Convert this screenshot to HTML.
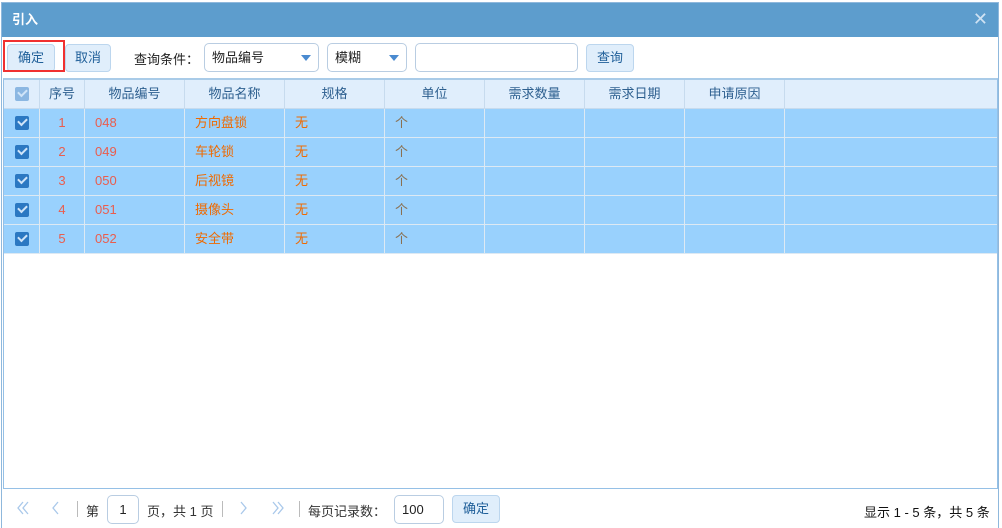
<!DOCTYPE html>
<html><head><meta charset="utf-8"><style>
*{margin:0;padding:0;box-sizing:border-box}
body{width:1002px;height:528px;background:#fff;font-family:"Liberation Sans","Noto Sans CJK SC",sans-serif;font-size:12px;color:#333;position:relative;overflow:hidden}
.abs{position:absolute}
.dlg{left:1px;top:2px;width:998px;height:526px;border:1px solid #8fb8dc;border-bottom:none}
.title{left:2px;top:3px;width:996px;height:34px;background:#5d9dcd;color:#fff;font-weight:bold;font-size:13px;line-height:34px;padding-left:10px}
.btn{height:28px;border:1px solid #bcd6ee;background:#e0eefb;border-radius:4px;color:#1f5f99;text-align:center;line-height:26px;font-size:13px}
.inp{height:29px;border:1px solid #b9cde2;border-radius:5px;background:#fff;line-height:27px;padding-left:7px;font-size:13px;color:#222}
.arr:after{content:"";position:absolute;right:7px;top:11px;border-left:5px solid transparent;border-right:5px solid transparent;border-top:6px solid #4a8ad0}
.grid{left:3px;top:78px;width:995px;height:411px;border:1px solid #95c0e6;border-top:2px solid #a9cbe8}
.row{position:absolute;left:0;width:993px;height:29px;display:flex}
.row div{border-right:1px solid #c7dbee;height:29px;line-height:28px;font-size:13px}
.hd{top:0;background:#e0eefc;border-bottom:1px solid #c7dbee}
.hd div{text-align:center;color:#2d5f8f}
.dr{background:#99d1fd;border-bottom:1px solid #dde9f3}
.dr div{border-right:1px solid #dde9f3}
.c0{width:36px;text-align:center}.c1{width:45px;text-align:center}.c2,.c3,.c4,.c5,.c6,.c7,.c8{width:100px}
.dr .c2,.dr .c3,.dr .c4,.dr .c5{padding-left:10px}
.red{color:#ea5d4d}.or{color:#ef6a00}.gy{color:#8a7050}
.cb{display:inline-block;width:14px;height:14px;background:#2b78c2;border-radius:2px;vertical-align:middle;position:relative;top:-1px}
.cb:after{content:"";position:absolute;left:3px;top:2px;width:7px;height:4px;border-left:2px solid #cfe4f8;border-bottom:2px solid #cfe4f8;transform:rotate(-45deg)}
.hd .cb{background:#8bb7e2}
.ft{font-size:13px;color:#333}
.sep{width:1px;height:16px;background:#bbb}
svg.pg{position:absolute;top:501px}
</style></head><body>
<div class="abs dlg"></div>
<div class="abs title">引入</div>
<div class="abs" style="right:14px;top:9px;color:#cfe2f3;font-size:18px;line-height:20px">✕</div>

<div class="abs btn" style="left:7px;top:44px;width:48px">确定</div>
<div class="abs" style="left:3px;top:40px;width:62px;height:32px;border:2px solid #f03030"></div>
<div class="abs btn" style="left:65px;top:44px;width:46px">取消</div>
<div class="abs" style="left:134px;top:49px;font-size:13px;color:#222">查询条件：</div>
<div class="abs inp arr" style="left:204px;top:43px;width:115px">物品编号</div>
<div class="abs inp arr" style="left:327px;top:43px;width:80px">模糊</div>
<div class="abs inp" style="left:415px;top:43px;width:163px"></div>
<div class="abs btn" style="left:586px;top:44px;width:48px">查询</div>

<div class="abs grid">
<div class="row hd"><div class="c0"><span class="cb"></span></div><div class="c1">序号</div><div class="c2">物品编号</div><div class="c3">物品名称</div><div class="c4">规格</div><div class="c5">单位</div><div class="c6">需求数量</div><div class="c7">需求日期</div><div class="c8">申请原因</div><div style="flex:1;border:none"></div></div>
<div class="row dr" style="top:29px"><div class="c0"><span class="cb"></span></div><div class="c1 red">1</div><div class="c2 red">048</div><div class="c3 or">方向盘锁</div><div class="c4 or">无</div><div class="c5 gy">个</div><div class="c6"></div><div class="c7"></div><div class="c8"></div><div style="flex:1;border:none"></div></div>
<div class="row dr" style="top:58px"><div class="c0"><span class="cb"></span></div><div class="c1 red">2</div><div class="c2 red">049</div><div class="c3 or">车轮锁</div><div class="c4 or">无</div><div class="c5 gy">个</div><div class="c6"></div><div class="c7"></div><div class="c8"></div><div style="flex:1;border:none"></div></div>
<div class="row dr" style="top:87px"><div class="c0"><span class="cb"></span></div><div class="c1 red">3</div><div class="c2 red">050</div><div class="c3 or">后视镜</div><div class="c4 or">无</div><div class="c5 gy">个</div><div class="c6"></div><div class="c7"></div><div class="c8"></div><div style="flex:1;border:none"></div></div>
<div class="row dr" style="top:116px"><div class="c0"><span class="cb"></span></div><div class="c1 red">4</div><div class="c2 red">051</div><div class="c3 or">摄像头</div><div class="c4 or">无</div><div class="c5 gy">个</div><div class="c6"></div><div class="c7"></div><div class="c8"></div><div style="flex:1;border:none"></div></div>
<div class="row dr" style="top:145px"><div class="c0"><span class="cb"></span></div><div class="c1 red">5</div><div class="c2 red">052</div><div class="c3 or">安全带</div><div class="c4 or">无</div><div class="c5 gy">个</div><div class="c6"></div><div class="c7"></div><div class="c8"></div><div style="flex:1;border:none"></div></div>
</div>

<svg class="pg" style="left:16px" width="14" height="14"><path d="M7 1L2 7l5 6M12 1L7 7l5 6" fill="none" stroke="#a9c8ea" stroke-width="1.3"/></svg>
<svg class="pg" style="left:51px" width="10" height="14"><path d="M7 1L2 7l5 6" fill="none" stroke="#a9c8ea" stroke-width="1.3"/></svg>
<div class="abs sep" style="left:77px;top:501px"></div>
<div class="abs ft" style="left:86px;top:501px">第</div>
<div class="abs inp" style="left:107px;top:495px;width:32px;padding:0;text-align:center">1</div>
<div class="abs ft" style="left:147px;top:501px">页，共 1 页</div>
<div class="abs sep" style="left:222px;top:501px"></div>
<svg class="pg" style="left:239px" width="10" height="14"><path d="M2 1l5 6-5 6" fill="none" stroke="#a9c8ea" stroke-width="1.3"/></svg>
<svg class="pg" style="left:271px" width="14" height="14"><path d="M2 1l5 6-5 6M7 1l5 6-5 6" fill="none" stroke="#a9c8ea" stroke-width="1.3"/></svg>
<div class="abs sep" style="left:299px;top:501px"></div>
<div class="abs ft" style="left:308px;top:501px">每页记录数：</div>
<div class="abs inp" style="left:394px;top:495px;width:50px">100</div>
<div class="abs btn" style="left:452px;top:495px;width:48px">确定</div>
<div class="abs ft" style="left:864px;top:502px;color:#111">显示 1 - 5 条，共 5 条</div>
</body></html>
